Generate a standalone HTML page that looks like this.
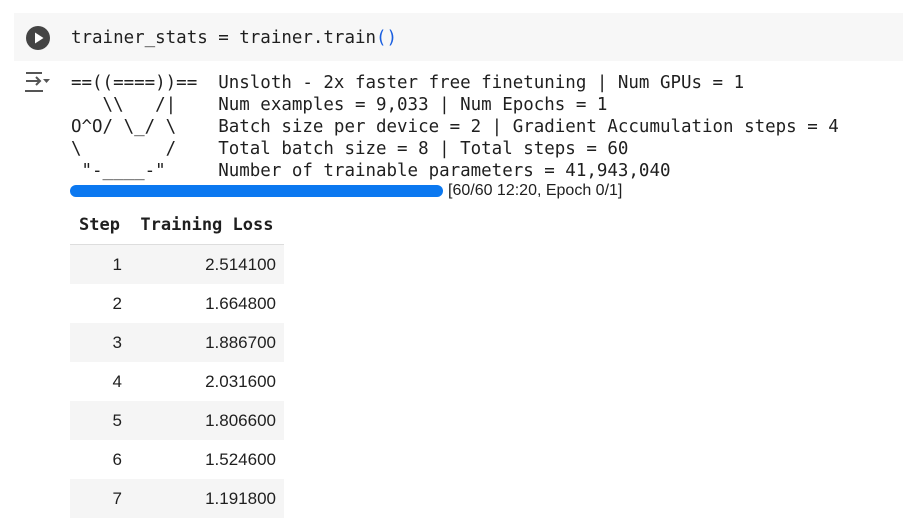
<!DOCTYPE html>
<html><head><style>
body{margin:0;width:903px;height:525px;background:#fff;position:relative;overflow:hidden}
.m{font-family:"DejaVu Sans Mono","Liberation Mono",monospace;font-size:17.48px;color:#1f1f1f;white-space:pre;position:absolute}
.s{font-family:"Liberation Sans",Arial,sans-serif;font-size:17px;color:#1f1f1f;position:absolute}
.row{position:absolute;left:70px;width:214px;height:39px}
.sh{background:#f5f5f5}
</style></head><body>
<div style="position:absolute;left:14px;top:13px;width:889px;height:48px;background:#f7f7f7"></div>
<svg style="position:absolute;left:26px;top:26px" width="24" height="24" viewBox="0 0 24 24"><circle cx="12" cy="12" r="12" fill="#444"/><path d="M9 6.5 L17.5 12 L9 17.5Z" fill="#fff"/></svg>
<div class="m" style="left:71px;top:27px;line-height:22px">trainer_stats = trainer.train<span style="color:#1a5fe0">()</span></div>
<svg style="position:absolute;left:25px;top:71px" width="26" height="22" viewBox="0 0 26 22"><g stroke="#555" stroke-width="2" fill="none"><path d="M1 2H17M1 10H15M11 6L15 10L11 14M1 19V20H17V19"/></g><path d="M18 8H25L21.5 12Z" fill="#555"/></svg>
<div class="m" style="left:71px;top:72px;line-height:22px">==((====))==  Unsloth - 2x faster free finetuning | Num GPUs = 1
   \\   /|    Num examples = 9,033 | Num Epochs = 1
O^O/ \_/ \    Batch size per device = 2 | Gradient Accumulation steps = 4
\        /    Total batch size = 8 | Total steps = 60
 "-____-"     Number of trainable parameters = 41,943,040</div>
<div style="position:absolute;left:70px;top:185px;width:373px;height:12px;border-radius:6px;background:#0b78f0"></div>
<div class="s" style="left:448px;top:182px;font-size:16px">[60/60 12:20, Epoch 0/1]</div>
<div class="m" style="left:79px;top:215px;font-weight:bold;font-size:17px">Step  Training Loss</div>
<div style="position:absolute;left:70px;top:244px;width:214px;height:1px;background:#ddd"></div>
<div class="row sh" style="top:245px"></div>
<div class="row sh" style="top:323px"></div>
<div class="row sh" style="top:401px"></div>
<div class="row sh" style="top:479px"></div>
<div class="s" style="left:70px;top:255px;width:52px;text-align:right;line-height:19.5px">1<br><br>2<br><br>3<br><br>4<br><br>5<br><br>6<br><br>7</div>
<div class="s" style="left:140px;top:255px;width:136px;text-align:right;line-height:19.5px">2.514100<br><br>1.664800<br><br>1.886700<br><br>2.031600<br><br>1.806600<br><br>1.524600<br><br>1.191800</div>
</body></html>
